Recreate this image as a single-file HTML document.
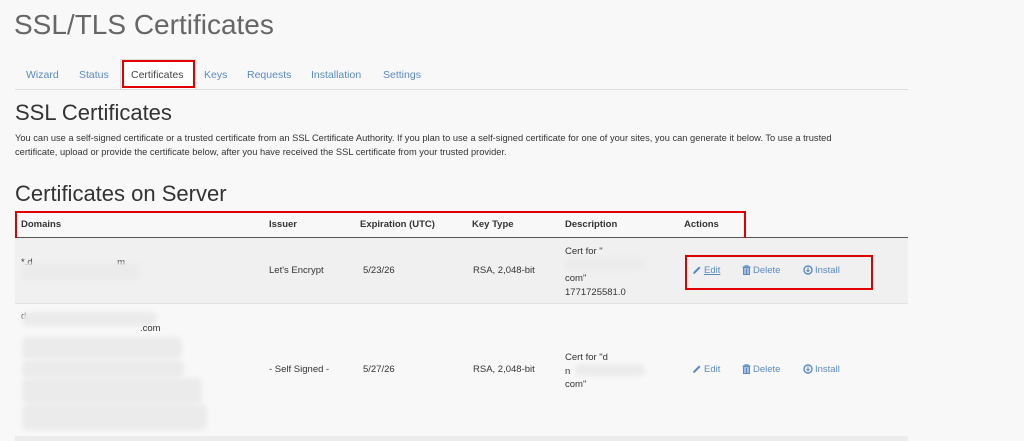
<!DOCTYPE html>
<html><head><meta charset="utf-8"><style>
body{margin:0;width:1024px;height:441px;overflow:hidden;background:#f8f8f8;font-family:"Liberation Sans",sans-serif;color:#333;position:relative}
.a{position:absolute;white-space:nowrap}
h1{position:absolute;left:14px;top:9px;margin:0;font-weight:normal;font-size:28px;color:#666}
.tab{position:absolute;top:69px;font-size:10.5px;color:#5a8ac6}
.blur{position:absolute;background:#ebebeb;border-radius:6px;filter:blur(2px)}
.t{font-size:9.5px;color:#333}
.th{font-size:9.5px;font-weight:bold;color:#333;top:219px}
.lnk{font-size:9.5px;color:#5a8ac6}
.lnk svg{vertical-align:-2px;margin-right:2px}
.red{position:absolute;border:2px solid #e00000}
</style></head><body>
<h1>SSL/TLS Certificates</h1>
<div class="tab" style="left:26px">Wizard</div>
<div class="tab" style="left:79px">Status</div>
<div style="position:absolute;left:120px;top:59px;width:74px;height:30px;background:#fff;border:1px solid #ddd;border-bottom:none"></div>
<div class="tab" style="left:131px;color:#444">Certificates</div>
<div class="tab" style="left:204px">Keys</div>
<div class="tab" style="left:247px">Requests</div>
<div class="tab" style="left:311px">Installation</div>
<div class="tab" style="left:383px">Settings</div>
<div class="red" style="left:122px;top:60px;width:69px;height:24px"></div>
<div style="position:absolute;left:15px;top:89px;width:893px;height:1px;background:#ddd"></div>
<div class="a" style="left:15px;top:100px;font-size:22px;color:#333">SSL Certificates</div>
<div class="a t" style="left:15px;top:131px;font-size:9.3px;line-height:14px">You can use a self-signed certificate or a trusted certificate from an SSL Certificate Authority. If you plan to use a self-signed certificate for one of your sites, you can generate it below. To use a trusted<br>certificate, upload or provide the certificate below, after you have received the SSL certificate from your trusted provider.</div>
<div class="a" style="left:15px;top:181px;font-size:22px;color:#333">Certificates on Server</div>
<div class="a th" style="left:21px">Domains</div>
<div class="a th" style="left:269px">Issuer</div>
<div class="a th" style="left:360px">Expiration (UTC)</div>
<div class="a th" style="left:472px">Key Type</div>
<div class="a th" style="left:565px">Description</div>
<div class="a th" style="left:684px">Actions</div>
<div style="position:absolute;left:15px;top:237px;width:893px;height:1px;background:#555"></div>
<div class="red" style="left:15px;top:211px;width:727px;height:28px"></div>
<div style="position:absolute;left:15px;top:238px;width:893px;height:65px;background:#f0f0f0;border-bottom:1px solid #e2e2e2"></div>
<div class="a t" style="left:21px;top:257px">*.d&nbsp;&nbsp;&nbsp;&nbsp;&nbsp;&nbsp;&nbsp;&nbsp;&nbsp;&nbsp;&nbsp;&nbsp;&nbsp;&nbsp;&nbsp;&nbsp;&nbsp;&nbsp;&nbsp;&nbsp;&nbsp;&nbsp;&nbsp;&nbsp;&nbsp;&nbsp;&nbsp;&nbsp;&nbsp;&nbsp;&nbsp;&nbsp;m</div>
<div class="blur" style="left:22px;top:263px;width:118px;height:17px"></div>
<div class="a t" style="left:269px;top:265px">Let's Encrypt</div>
<div class="a t" style="left:363px;top:265px">5/23/26</div>
<div class="a t" style="left:473px;top:265px">RSA, 2,048-bit</div>
<div class="a t" style="left:565px;top:245px;line-height:13.5px">Cert for "<br><br>com"<br>1771725581.0</div>
<div class="blur" style="left:565px;top:258px;width:80px;height:12px"></div>
<div class="a lnk" style="left:692px;top:265px"><svg width="10" height="10" viewBox="0 0 10 10"><path d="M1 9 L1.5 7 L7 1.5 L8.5 3 L3 8.5 Z" fill="#5a8ac6"/></svg><u>Edit</u></div>
<div class="a lnk" style="left:742px;top:265px"><svg width="9" height="10" viewBox="0 0 9 10"><path d="M0.5 2h8M3 2V0.8h3V2M1.5 3h6v6.5h-6z M3 4v5M4.5 4v5M6 4v5" stroke="#5a8ac6" fill="none" stroke-width="1"/></svg>Delete</div>
<div class="a lnk" style="left:803px;top:265px"><svg width="10" height="10" viewBox="0 0 10 10"><circle cx="5" cy="5" r="4" stroke="#5a8ac6" stroke-width="1.4" fill="none"/><path d="M5 2.5v4M3.5 5l1.5 1.7L6.5 5" stroke="#5a8ac6" fill="none"/></svg>Install</div>
<div class="red" style="left:685px;top:255px;width:184px;height:31px"></div>
<div class="a t" style="left:21px;top:311px">d</div>
<div class="blur" style="left:22px;top:312px;width:135px;height:14px"></div>
<div class="a t" style="left:140px;top:323px">.com</div>
<div class="blur" style="left:22px;top:337px;width:160px;height:22px"></div>
<div class="blur" style="left:22px;top:360px;width:162px;height:18px"></div>
<div class="blur" style="left:22px;top:378px;width:180px;height:26px"></div>
<div class="blur" style="left:22px;top:404px;width:185px;height:26px"></div>
<div class="a t" style="left:269px;top:364px">- Self Signed -</div>
<div class="a t" style="left:363px;top:364px">5/27/26</div>
<div class="a t" style="left:473px;top:364px">RSA, 2,048-bit</div>
<div class="a t" style="left:565px;top:351px;line-height:13.5px">Cert for "d<br>n<br>com"</div>
<div class="blur" style="left:575px;top:364px;width:70px;height:12px"></div>
<div class="a lnk" style="left:692px;top:364px"><svg width="10" height="10" viewBox="0 0 10 10"><path d="M1 9 L1.5 7 L7 1.5 L8.5 3 L3 8.5 Z" fill="#5a8ac6"/></svg>Edit</div>
<div class="a lnk" style="left:742px;top:364px"><svg width="9" height="10" viewBox="0 0 9 10"><path d="M0.5 2h8M3 2V0.8h3V2M1.5 3h6v6.5h-6z M3 4v5M4.5 4v5M6 4v5" stroke="#5a8ac6" fill="none" stroke-width="1"/></svg>Delete</div>
<div class="a lnk" style="left:803px;top:364px"><svg width="10" height="10" viewBox="0 0 10 10"><circle cx="5" cy="5" r="4" stroke="#5a8ac6" stroke-width="1.4" fill="none"/><path d="M5 2.5v4M3.5 5l1.5 1.7L6.5 5" stroke="#5a8ac6" fill="none"/></svg>Install</div>
<div style="position:absolute;left:15px;top:436px;width:893px;height:5px;background:#ececec"></div>
</body></html>
